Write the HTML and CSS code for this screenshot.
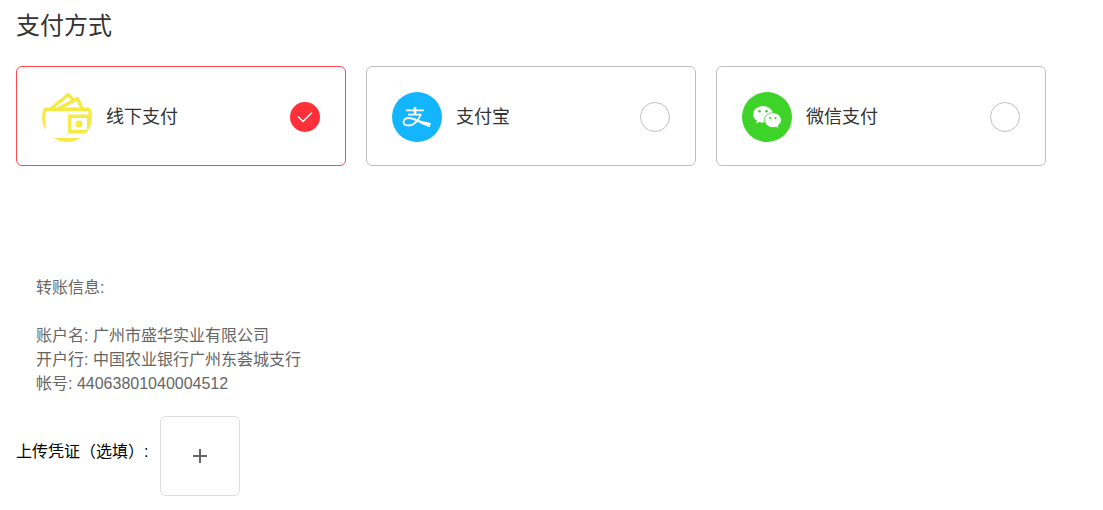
FILE: index.html
```html
<!DOCTYPE html>
<html lang="zh-CN">
<head>
   <meta charset="UTF-8">
   <title>支付方式</title>
   <link rel="stylesheet" href="styles.css">
</head>
<body>
   <form class="payment">
      <h1 class="title">支付方式</h1>
      <div class="methods">
         <label class="method">
            <svg class="method-icon" viewBox="0 0 50 50" aria-hidden="true">
               <clipPath id="round"><circle cx="25" cy="25" r="25"/></clipPath>
               <g clip-path="url(#round)" fill="none" stroke="#f5ea42" stroke-width="3.400">
                  <path d="M9 16.500 26.500 2.500 31 8M17 16.500 35.500 6.500 40 16.500" stroke-linejoin="round"/>
                  <path d="M1.800 48V20.500Q1.800 17.300 5 17.300H45Q48.200 17.300 48.200 20.500V39.800H27.800V24.300H48"/>
                  <path d="M46.700 23V40"/>
                  <path d="M0 48H50" stroke-width="4"/>
                  <circle cx="37" cy="32" r="3.500" fill="#f5ea42" stroke="none"/>
               </g>
            </svg>
            <span class="method-name">线下支付</span>
            <input class="method-radio" type="radio" name="method" value="offline" checked>
         </label>
         <label class="method">
            <svg class="method-icon" viewBox="0 0 50 50" aria-hidden="true">
               <circle cx="25" cy="25" r="25" fill="#14b5ff"/>
               <g fill="none" stroke="#fff" stroke-width="1.800">
                  <path d="M14 18.300H32M16 22.700H29.500"/>
                  <path d="M23 15V22.500" stroke-width="2.600"/>
                  <path d="M28.500 22.500C27 28 22 33.500 16.500 33.500C13 33.500 11.500 32 11.500 30C11.500 27.500 14 26 17 26C21 26 25 28.500 30 30.500"/>
               </g>
               <path d="M22 26.500Q31 30 39 31L37.500 35.300Q29 32 22 28Z" fill="#fff"/>
            </svg>
            <span class="method-name">支付宝</span>
            <input class="method-radio" type="radio" name="method" value="alipay">
         </label>
         <label class="method">
            <svg class="method-icon" viewBox="0 0 50 50" aria-hidden="true">
               <circle cx="25" cy="25" r="25" fill="#3dd329"/>
               <path d="M21 14C15.500 14 11 17.700 11 22.300C11 25 12.500 27.300 15 28.800L14 31.500 17.500 30C18.600 30.400 19.800 30.500 21 30.500C26.500 30.500 31 26.800 31 22.300C31 17.700 26.500 14 21 14Z" fill="#fff"/>
               <path d="M30.800 20.800C26.400 20.800 22.500 24 22.500 28.100C22.500 32.200 26.400 35.600 30.800 35.600C31.900 35.600 33 35.400 34 35L36.800 36.500 36 33.700C37.800 32.400 39.300 30.300 39.300 28.100C39.300 24 35.300 20.800 30.800 20.800Z" fill="#fff" stroke="#3dd329" stroke-width=".8"/>
               <g fill="#3dd329">
                  <circle cx="17.500" cy="19.200" r="1.300"/>
                  <circle cx="24.500" cy="19.200" r="1.300"/>
                  <circle cx="28.200" cy="26" r="1.100"/>
                  <circle cx="33.500" cy="26" r="1.100"/>
               </g>
            </svg>
            <span class="method-name">微信支付</span>
            <input class="method-radio" type="radio" name="method" value="wechat">
         </label>
      </div>
      <div class="transfer">
         <p>转账信息:</p>
         <br>
         <p>账户名: 广州市盛华实业有限公司</p>
         <p>开户行: 中国农业银行广州东荟城支行</p>
         <p>帐号: 44063801040004512</p>
      </div>
      <div class="upload">
         <label class="upload-label" for="voucher">上传凭证（选填）:</label>
         <button class="upload-button" id="voucher" type="button">
            <svg class="upload-icon" viewBox="0 0 16 16" aria-hidden="true">
               <path d="M1 8H15M8 1V15" fill="none" stroke="#666" stroke-width="2"/>
            </svg>
         </button>
      </div>
   </form>
</body>
</html>
```
FILE: styles.css
```css
* {
    margin: 0;
    padding: 0;
    box-sizing: border-box;
}
body {
    background: #fff;
    color: #333;
    font-family: "Liberation Sans", "Noto Sans CJK SC", sans-serif;
    font-size: 16px;
    line-height: 24px;
}
.payment {
    padding: 8px 16px 14px;
}
.title {
    font-size: 24px;
    font-weight: 400;
    line-height: 36px;
    margin-bottom: 22px;
}
.methods {
    display: flex;
    gap: 20px;
}
.method {
    display: flex;
    flex: 0 1 330px;
    align-items: center;
    height: 100px;
    padding: 2px 25px 0;
    border: 1px solid #bfbfbf;
    border-radius: 6px;
    cursor: pointer;
}
.method:has(:checked) {
    border-color: #ff464e;
}
.method-icon {
    flex: none;
    width: 50px;
    height: 50px;
    margin-right: 14px;
}
.method-name {
    flex: 1;
    font-size: 18px;
}
.method-radio {
    appearance: none;
    flex: none;
    width: 30px;
    height: 30px;
    border: 1px solid #bfbfbf;
    border-radius: 50%;
    cursor: pointer;
}
.method-radio:checked {
    border: none;
    background: #ff3039 url("data:image/svg+xml,%3Csvg xmlns='http://www.w3.org/2000/svg' viewBox='0 0 30 30'%3E%3Cpath d='M8 14.500 13 19.500 22 10.500' fill='none' stroke='white' stroke-width='1.500'/%3E%3C/svg%3E");
}
.transfer {
    margin-top: 90px;
    padding: 20px;
    color: #666;
}
.upload {
    display: flex;
    align-items: center;
    gap: 12px;
    color: #000;
}
.upload-label {
    padding-bottom: 8px;
}
.upload-button {
    display: flex;
    align-items: center;
    justify-content: center;
    width: 80px;
    height: 80px;
    background: #fff;
    border: 1px solid #ddd;
    border-radius: 6px;
    cursor: pointer;
}
.upload-icon {
    width: 16px;
    height: 16px;
}
```
